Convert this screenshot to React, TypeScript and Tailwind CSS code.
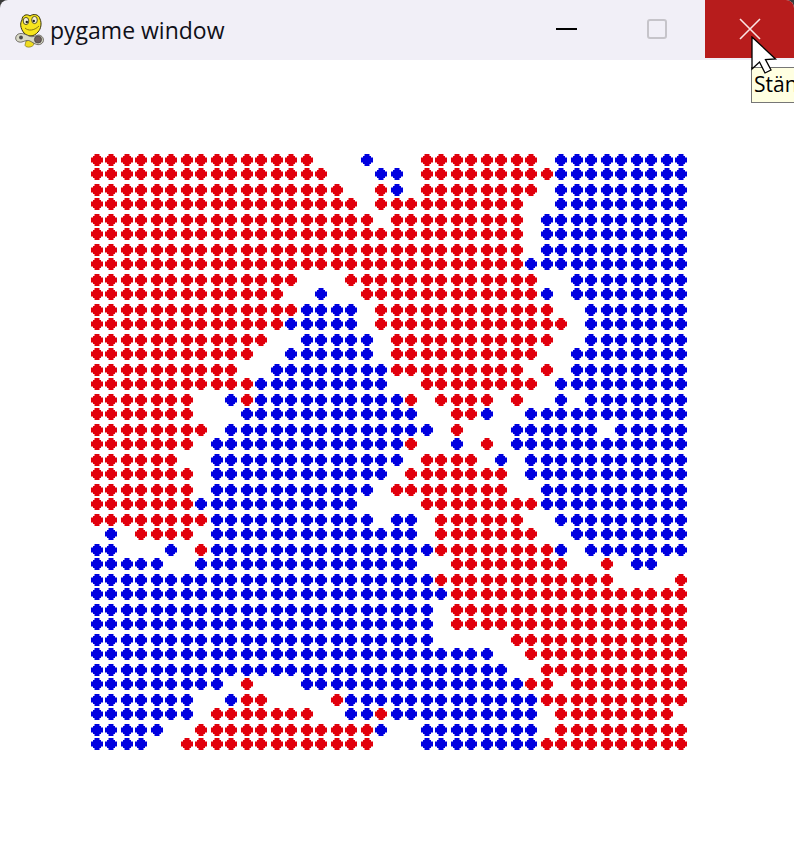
const rows = [
  "r15 .3 b1 .3 r8 .1 b9",
  "r16 .3 b2 .1 r9 b9",
  "r17 .2 r1 b1 .1 r8 .1 b9",
  "r18 .1 r10 .2 b9",
  "r19 .1 r9 .1 b10",
  "r29 .1 b10",
  "r29 .1 b10",
  "r29 b11",
  "r14 .3 r13 .2 b8",
  "r13 .2 b1 .2 r12 b1 .1 b8",
  "r14 b4 .1 r12 .2 b7",
  "r13 b5 .1 r13 .1 b7",
  "r12 .2 b5 .1 r11 .2 b7",
  "r11 .2 b6 .1 r10 .2 b8",
  "r10 .2 b8 r9 .1 r1 .1 b8",
  "r11 b9 .2 r8 .1 b9",
  "r7 .2 b1 r1 b10 r1 .1 r4 .1 r1 .2 b1 .1 b7",
  "r7 .3 b12 .2 r2 b1 .2 b11",
  "r8 .1 b14 .1 r1 .3 b6 .1 b5",
  "r7 .1 b13 r1 .2 b1 .1 r1 .1 b12",
  "r6 .2 b13 .1 r4 .1 b1 .1 b11",
  "r7 .1 b12 .1 r7 .1 b11",
  "r7 .1 b11 .1 r8 .2 b10",
  "r7 b11 .4 r8 b10",
  "r8 b11 .1 b2 .1 r6 .2 b9",
  ".1 b1 .1 r4 .1 b14 .1 r7 .2 b8",
  "b2 .3 b1 .1 r1 b15 r8 b1 .1 b7",
  "b5 .2 b15 .2 r8 .2 r1 .1 b2 .2",
  "b23 r12 .4 r1",
  "b24 r16",
  "b23 .1 r16",
  "b23 .1 r16",
  "b23 .5 r12",
  "b27 .2 r11",
  "b28 .2 r10",
  "b9 .1 r1 .3 b15 r2 .1 r8",
  "b7 .2 b1 r2 .4 r1 b13 r10",
  "b7 .1 r7 .2 b2 r1 b10 .1 r8 .1",
  "b5 .2 r12 b1 .2 b8 .1 r9",
  "b4 .2 r13 .3 b8 r10",
];

// expand "r15 .3 b1" into one char per cell
const cells = rows.flatMap((row) =>
  row.split(" ").flatMap((run) => Array<string>(Number(run.slice(1))).fill(run[0])),
);

function Dot({ kind }: { kind: string }) {
  if (kind === ".") return <div />;
  return (
    <div
      className={`h-3 w-3 [clip-path:polygon(3.5px_0,8.5px_0,8.5px_2px,10px_2px,10px_3.5px,12px_3.5px,12px_8.5px,10px_8.5px,10px_10px,8.5px_10px,8.5px_12px,3.5px_12px,3.5px_10px,2px_10px,2px_8.5px,0_8.5px,0_3.5px,2px_3.5px,2px_2px,3.5px_2px)] ${
        kind === "r" ? "bg-[#e2000c]" : "bg-[#0000e0]"
      }`}
    />
  );
}

function PygameIcon() {
  return (
    <svg width="30" height="34" viewBox="0 0 30 34" className="shrink-0">
      <path
        d="M10 31 C10 34 18 34 19 30 L16 26 L11 27Z"
        fill="#f0dc20"
        stroke="#6f6512"
        strokeWidth="0.6"
      />
      <path
        d="M9 19 C5 14 5 9 7 6 C7 1 12 -0.5 15 2 C18 -0.5 24 0 25 5 C27 9 26 15 23 18 C19 23 13 23 9 19Z"
        fill="#f6e51e"
        stroke="#37320f"
        strokeWidth="1"
      />
      <ellipse cx="11" cy="7" rx="2.8" ry="3.6" fill="#f4f1d4" stroke="#37320f" strokeWidth="0.8" />
      <ellipse cx="19.5" cy="6" rx="2.8" ry="3.6" fill="#f4f1d4" stroke="#37320f" strokeWidth="0.8" />
      <circle cx="11.8" cy="8" r="1.2" fill="#222" />
      <circle cx="18.8" cy="7" r="1.2" fill="#222" />
      <path d="M10 14 C13 17 19 17 24 12" fill="none" stroke="#8a7a10" strokeWidth="1" />
      <path
        d="M2 21 C5 18 10 20 14 22 C18 24 21 21 24 21 C29 22 30 28 26 30 C22 32 19 29 15 27 C11 25 8 29 4 28 C0 27 0 23 2 21Z"
        fill="#d8d8c6"
        stroke="#55524a"
        strokeWidth="0.8"
      />
      <circle cx="6" cy="23.5" r="1.9" fill="#4a4a4a" />
      <circle cx="23" cy="25.5" r="3.6" fill="#6e5f5c" stroke="#333" strokeWidth="0.6" />
    </svg>
  );
}

export default function App() {
  return (
    <div className="relative h-[858px] w-[794px] overflow-hidden bg-[#3a3a3a] font-['Open_Sans',sans-serif]">
      {/* Title bar */}
      <div className="flex h-[60px] items-center rounded-t-[8px] bg-[#f1eff7]">
        <div className="ml-[15px] mt-[2px] flex items-center">
          <PygameIcon />
        </div>
        <span className="ml-[5px] text-[23px] text-[#101018]">pygame window</span>
        <div className="ml-auto flex h-full items-start">
          <div className="flex h-[58px] w-[86px] items-center justify-center">
            <div className="h-[2px] w-[21px] bg-black" />
          </div>
          <div className="flex h-[58px] w-[96px] items-center justify-center">
            <div className="h-[20px] w-[20px] rounded-[3px] border-2 border-[#c6c4ca]" />
          </div>
          <div className="flex h-[58px] w-[89px] items-center justify-center rounded-tr-[8px] bg-[#b71c1c]">
            <svg width="22" height="22" viewBox="0 0 22 22">
              <path d="M1 1 L21 21 M21 1 L1 21" stroke="#fbe4e4" strokeWidth="1.6" fill="none" />
            </svg>
          </div>
        </div>
      </div>

      {/* Board */}
      <div className="h-[798px] bg-white pl-[91px] pt-[94px]">
        <div className="grid grid-cols-[repeat(20,14px_16px)] grid-rows-[repeat(20,14px_16px)]">
          {cells.map((kind, i) => (
            <Dot key={i} kind={kind} />
          ))}
        </div>
      </div>

      {/* Tooltip */}
      <div className="absolute left-[751px] top-[67px] flex h-[36px] w-[60px] items-center border border-[#767676] bg-[#ffffe1] pl-[2px] text-[21px] text-black">
        Stäng
      </div>

      {/* Cursor */}
      <svg width="28" height="40" viewBox="0 0 28 40" className="absolute left-[751px] top-[36px]">
        <path
          d="M1 1 L1 33 L8.5 26 L14 37 L20 34 L14.5 23.5 L24.5 23 Z"
          fill="#ffffff"
          stroke="#000000"
          strokeWidth="1.3"
        />
      </svg>
    </div>
  );
}
